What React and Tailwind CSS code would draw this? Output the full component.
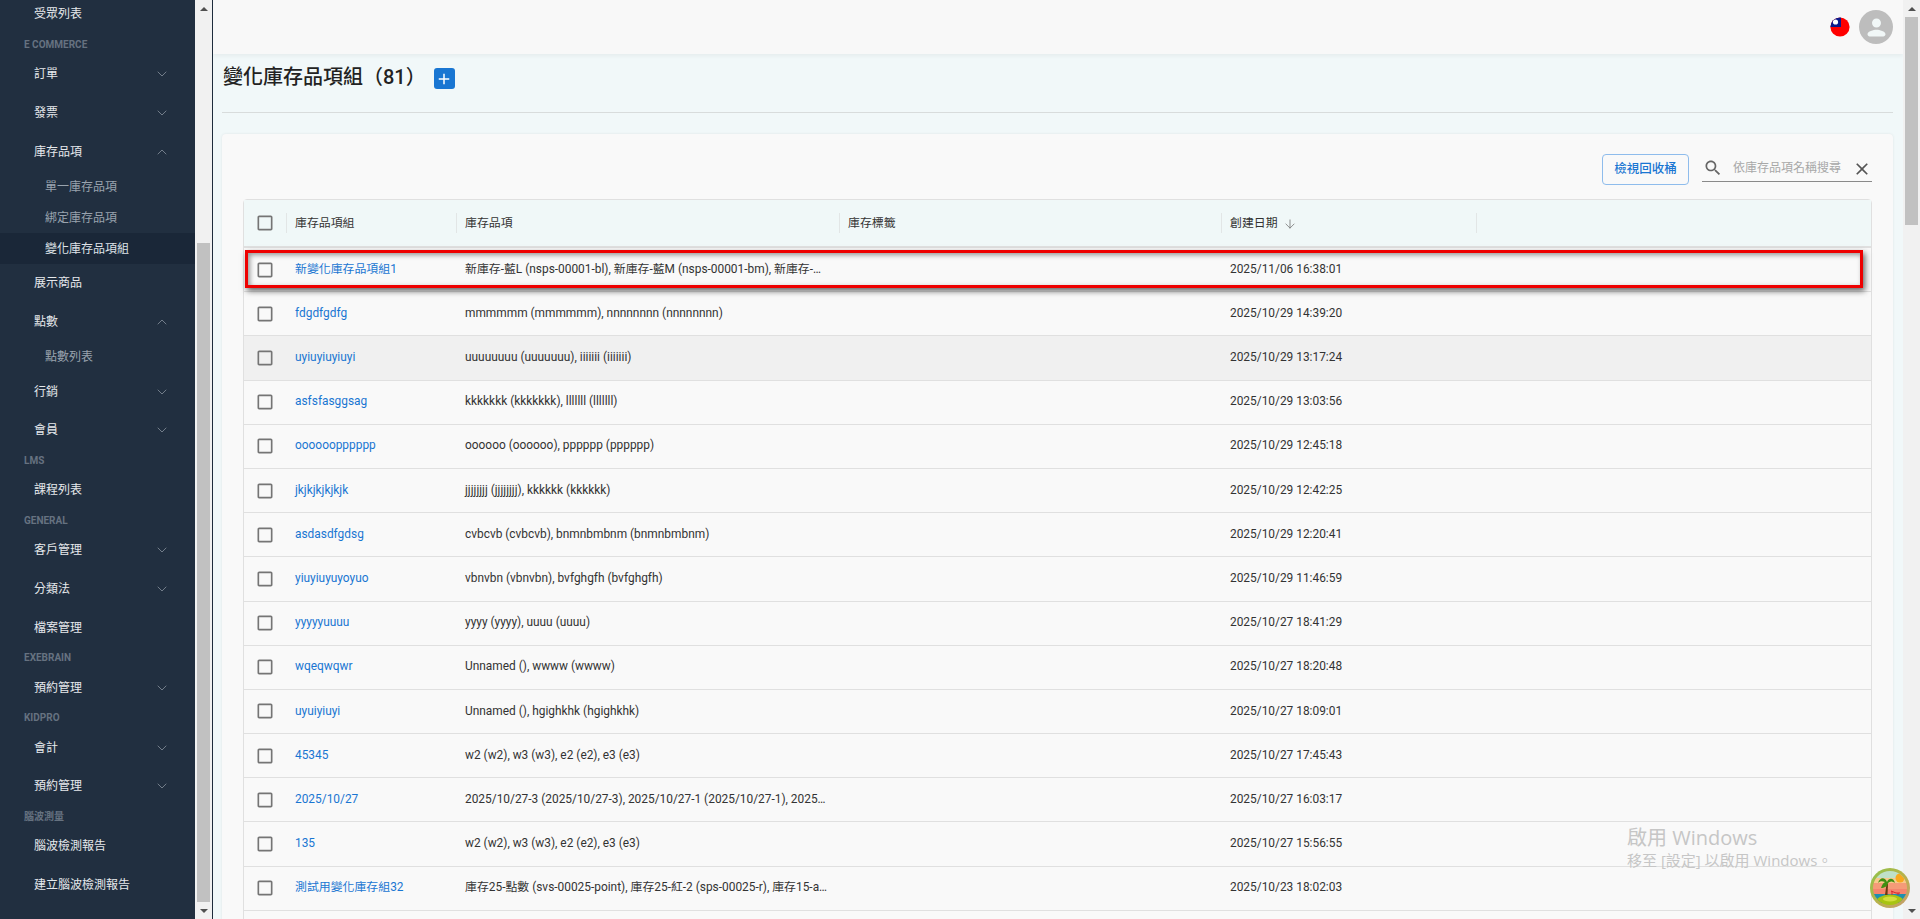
import { ChevronDown, ChevronUp, ArrowDown } from "lucide-react";

const sidebarItems = [
  { type: "item", label: "受眾列表" },
  { type: "group", label: "E COMMERCE" },
  { type: "item", label: "訂單", arrow: "down" },
  { type: "item", label: "發票", arrow: "down" },
  { type: "item", label: "庫存品項", arrow: "up" },
  { type: "sub", label: "單一庫存品項" },
  { type: "sub", label: "綁定庫存品項" },
  { type: "sub", label: "變化庫存品項組", active: true },
  { type: "item", label: "展示商品" },
  { type: "item", label: "點數", arrow: "up" },
  { type: "sub", label: "點數列表" },
  { type: "item", label: "行銷", arrow: "down" },
  { type: "item", label: "會員", arrow: "down" },
  { type: "group", label: "LMS" },
  { type: "item", label: "課程列表" },
  { type: "group", label: "GENERAL" },
  { type: "item", label: "客戶管理", arrow: "down" },
  { type: "item", label: "分類法", arrow: "down" },
  { type: "item", label: "檔案管理" },
  { type: "group", label: "EXEBRAIN" },
  { type: "item", label: "預約管理", arrow: "down" },
  { type: "group", label: "KIDPRO" },
  { type: "item", label: "會計", arrow: "down" },
  { type: "item", label: "預約管理", arrow: "down" },
  { type: "group", label: "腦波測量" },
  { type: "item", label: "腦波檢測報告" },
  { type: "item", label: "建立腦波檢測報告" },
];

const rows = [
  ["新變化庫存品項組1", "新庫存-藍L (nsps-00001-bl), 新庫存-藍M (nsps-00001-bm), 新庫存-藍S (nsps-00001-bs)", "2025/11/06 16:38:01"],
  ["fdgdfgdfg", "mmmmmm (mmmmmm), nnnnnnnn (nnnnnnnn)", "2025/10/29 14:39:20"],
  ["uyiuyiuyiuyi", "uuuuuuuu (uuuuuuu), iiiiiii (iiiiiii)", "2025/10/29 13:17:24"],
  ["asfsfasggsag", "kkkkkkk (kkkkkkk), lllllll (lllllll)", "2025/10/29 13:03:56"],
  ["oooooopppppp", "oooooo (oooooo), pppppp (pppppp)", "2025/10/29 12:45:18"],
  ["jkjkjkjkjkjk", "jjjjjjjj (jjjjjjjj), kkkkkk (kkkkkk)", "2025/10/29 12:42:25"],
  ["asdasdfgdsg", "cvbcvb (cvbcvb), bnmnbmbnm (bnmnbmbnm)", "2025/10/29 12:20:41"],
  ["yiuyiuyuyoyuo", "vbnvbn (vbnvbn), bvfghgfh (bvfghgfh)", "2025/10/29 11:46:59"],
  ["yyyyyuuuu", "yyyy (yyyy), uuuu (uuuu)", "2025/10/27 18:41:29"],
  ["wqeqwqwr", "Unnamed (), wwww (wwww)", "2025/10/27 18:20:48"],
  ["uyuiyiuyi", "Unnamed (), hgighkhk (hgighkhk)", "2025/10/27 18:09:01"],
  ["45345", "w2 (w2), w3 (w3), e2 (e2), e3 (e3)", "2025/10/27 17:45:43"],
  ["2025/10/27", "2025/10/27-3 (2025/10/27-3), 2025/10/27-1 (2025/10/27-1), 2025/10/27-2 (2025/10/27-2)", "2025/10/27 16:03:17"],
  ["135", "w2 (w2), w3 (w3), e2 (e2), e3 (e3)", "2025/10/27 15:56:55"],
  ["測試用變化庫存組32", "庫存25-點數 (svs-00025-point), 庫存25-紅-2 (sps-00025-r), 庫存15-a (sps-00015-a)", "2025/10/23 18:02:03"],
];

const gridCols = "grid grid-cols-[42px_170px_383px_382px_255px_1fr]";

const Checkbox = () => (
  <svg viewBox="0 0 24 24" className="w-5 h-5 fill-[#757575]">
    <path d="M19 5v14H5V5h14m0-2H5c-1.1 0-2 .9-2 2v14c0 1.1.9 2 2 2h14c1.1 0 2-.9 2-2V5c0-1.1-.9-2-2-2z" />
  </svg>
);

const Flag = () => (
  <svg viewBox="0 0 20 20" className="w-5 h-5">
    <defs>
      <clipPath id="flagClip">
        <circle cx="10" cy="10" r="9.6" />
      </clipPath>
    </defs>
    <g clipPath="url(#flagClip)">
      <rect width="20" height="20" fill="#f00" />
      <rect width="11" height="10" fill="#0a1a8c" />
      <circle cx="5.5" cy="5" r="2.6" fill="#fff" />
    </g>
  </svg>
);

const Mascot = () => (
  <svg viewBox="0 0 40 40" className="w-10 h-10">
    <defs>
      <clipPath id="mascotClip">
        <circle cx="20" cy="20" r="17" />
      </clipPath>
      <linearGradient id="ringGrad" x1="0" y1="0" x2="1" y2="1">
        <stop offset="0" stopColor="#8bc34a" />
        <stop offset="0.5" stopColor="#b7b34a" />
        <stop offset="1" stopColor="#c99a72" />
      </linearGradient>
    </defs>
    <circle cx="20" cy="20" r="20" fill="url(#ringGrad)" />
    <g clipPath="url(#mascotClip)">
      <rect width="40" height="8" y="2" fill="#bfe0c8" />
      <rect width="40" height="5" y="10" fill="#f8c98c" />
      <rect width="40" height="6" y="15" fill="#f59b78" />
      <rect width="40" height="5" y="21" fill="#f5856f" />
      <rect width="40" height="9" y="26" fill="#1f8fae" />
      <circle cx="30" cy="10" r="4.5" fill="#f8a81e" />
      <ellipse cx="20" cy="36" rx="15" ry="9.5" fill="#a8c412" />
      <ellipse cx="20" cy="31" rx="7" ry="2.5" fill="#d2de3c" />
      <path d="M15 27 L16.5 16 L18 16 L17.5 27 Z" fill="#6b3c12" />
      <path d="M8 15 C10 9 15 9 17 14 C19 9 24 10 25 15 C22 13 20 13 18 15 C18 18 14 20 11 20 C12 17 13 15 15 14 C12 13 10 13 8 15 Z" fill="#3f8f12" />
      <path d="M21 23 L26 25 L30 25 M22 23 L22 27 M28 25 L28 27" stroke="#d6262c" strokeWidth="1" fill="none" />
    </g>
  </svg>
);

const SidebarRow = ({ item }) => {
  if (item.type === "group") {
    return (
      <div className="h-[21.3px] pl-6 flex items-center text-[10px] font-bold text-[#667280]">
        {item.label}
      </div>
    );
  }
  if (item.type === "sub") {
    return (
      <div
        className={
          item.active
            ? "h-[31px] pl-[45px] flex items-center text-[12px] text-[#dfe3e8] bg-[#1a2738]"
            : "h-[31px] pl-[45px] flex items-center text-[12px] text-[#99a3ae]"
        }
      >
        {item.label}
      </div>
    );
  }
  return (
    <div className="h-[38.7px] pl-[34px] pr-[25px] flex items-center justify-between text-[12px] text-[#e6e9ec]">
      <span>{item.label}</span>
      {item.arrow === "down" && <ChevronDown size={16} strokeWidth={1.3} className="text-[#808a95]" />}
      {item.arrow === "up" && <ChevronUp size={16} strokeWidth={1.3} className="text-[#808a95]" />}
    </div>
  );
};

const Sidebar = () => (
  <aside className="w-[195px] h-full shrink-0 bg-[#212f40] overflow-hidden">
    <div className="-mt-[5px]">
      {sidebarItems.map((item, i) => (
        <SidebarRow key={i} item={item} />
      ))}
    </div>
  </aside>
);

const Scrollbar = ({ thumbTop, thumbHeight }) => (
  <div className="w-[17px] h-full shrink-0 bg-[#f1f1f1] flex flex-col items-center">
    <div className="h-[17px] flex items-center justify-center">
      <div className="w-0 h-0 border-x-[4px] border-x-transparent border-b-[4px] border-b-[#505050]" />
    </div>
    <div className="flex-1 w-full px-[2px]">
      <div className={thumbTop + " " + thumbHeight + " bg-[#c1c1c1]"} />
    </div>
    <div className="h-[17px] flex items-center justify-center">
      <div className="w-0 h-0 border-x-[4px] border-x-transparent border-t-[4px] border-t-[#505050]" />
    </div>
  </div>
);

const TopBar = () => (
  <header className="h-[54px] shrink-0 bg-[#f8f8f8] shadow-[0_2px_4px_rgba(0,0,0,0.05)] flex items-center justify-end gap-[9px] pr-[10px]">
    <Flag />
    <div className="w-[34px] h-[34px] rounded-full bg-[#bdbdbd] flex items-center justify-center overflow-hidden">
      <svg viewBox="0 0 24 24" className="w-[27px] h-[27px] fill-[#f1f7f7]">
        <path d="M12 12c2.21 0 4-1.79 4-4s-1.79-4-4-4-4 1.79-4 4 1.79 4 4 4zm0 2c-2.67 0-8 1.34-8 4c0 1 .9 2 2 2h12c1.1 0 2-1 2-2 0-2.66-5.33-4-8-4z" />
      </svg>
    </div>
  </header>
);

const Toolbar = () => (
  <div className="h-[65px] flex items-start justify-end pt-[20px] pr-[21px]">
    <button className="w-[87px] h-[31px] border border-[#8ebcec] rounded-[4px] text-[12.5px] font-medium text-[#1976d2] mr-[13px]">
      檢視回收桶
    </button>
    <div className="w-[170px] h-[28px] border-b border-[#8a8a8a] flex items-center">
      <svg viewBox="0 0 24 24" className="w-[20px] h-[20px] fill-[#666] ml-[1px]">
        <path d="M15.5 14h-.79l-.28-.27C15.41 12.59 16 11.11 16 9.5 16 5.91 13.09 3 9.5 3S3 5.91 3 9.5 5.91 16 9.5 16c1.61 0 3.09-.59 4.23-1.57l.27.28v.79l5 4.99L20.49 19l-4.99-5zm-6 0C7.01 14 5 11.99 5 9.5S7.01 5 9.5 5 14 7.01 14 9.5 11.99 14 9.5 14z" />
      </svg>
      <span className="ml-[10px] text-[12px] text-[#a8a8a8] whitespace-nowrap">依庫存品項名稱搜尋</span>
    </div>
  </div>
);

const HeaderCell = ({ children }) => (
  <div className="relative flex items-center pl-[9px] pt-px before:absolute before:left-0 before:top-[13px] before:bottom-[13px] before:w-px before:bg-[#e2e6e6] text-[11.9px] text-[#333]">
    {children}
  </div>
);

const DataTable = () => (
  <div className="ml-[21px] mr-[21px] border border-[#e0e0e0] rounded-t-[4px]">
    <div className={gridCols + " h-[48px] bg-[#f0f8f8] border-b-2 border-[#e0e0e0]"}>
      <div className="flex items-center justify-center">
        <Checkbox />
      </div>
      <HeaderCell>庫存品項組</HeaderCell>
      <HeaderCell>庫存品項</HeaderCell>
      <HeaderCell>庫存標籤</HeaderCell>
      <HeaderCell>
        創建日期
        <ArrowDown size={14} strokeWidth={1.4} className="ml-[5px] text-[#777]" />
      </HeaderCell>
      <HeaderCell />
    </div>
    {rows.map((row, i) => (
      <div
        key={row[0]}
        className={
          gridCols +
          " relative h-[44.2px] items-center border-b border-[#e0e0e0] text-[11.9px] text-[#333]" +
          (i === 2 ? " bg-[#f0f0f0]" : "")
        }
      >
        <div className="flex justify-center">
          <Checkbox />
        </div>
        <div className="pl-[9px] text-[#1976d2] truncate">{row[0]}</div>
        <div className="pl-[9px] pr-[10px] truncate">{row[1]}</div>
        <div />
        <div className="pl-[9px]">{row[2]}</div>
        <div />
        {i === 0 && (
          <div className="absolute left-[1px] top-[2px] w-[1618px] h-[38px] border-[3px] border-[#ee0000] shadow-[2px_3px_6px_rgba(0,0,0,0.6),inset_2px_2px_5px_rgba(0,0,0,0.4)]" />
        )}
      </div>
    ))}
    <div className="h-[44px]" />
  </div>
);

export default function App() {
  return (
    <div className="relative w-[1920px] h-[919px] flex overflow-hidden bg-[#f1f8f9] font-['Roboto','Noto_Sans_CJK_TC',sans-serif]">
      <Sidebar />
      <Scrollbar thumbTop="mt-[226px]" thumbHeight="h-[659px]" />
      <div className="w-px h-full shrink-0 bg-[#1e2c3c]" />
      <main className="flex-1 min-w-0 h-full flex flex-col overflow-hidden">
        <TopBar />
        <div className="pl-[9px] pr-[10px]">
          <div className="h-[59px] flex items-center border-b border-[#d8dcdc]">
            <h1 className="text-[20px] leading-none font-medium text-[#222] -mt-[12px] ml-[1px]">變化庫存品項組（81）</h1>
            <button className="ml-[8px] -mt-[9px] w-[21px] h-[21px] rounded-[3px] bg-[#1976d2] flex items-center justify-center">
              <svg viewBox="0 0 24 24" className="w-[18px] h-[18px] fill-white">
                <path d="M19 13h-6v6h-2v-6H5v-2h6V5h2v6h6v2z" />
              </svg>
            </button>
          </div>
          <section className="mt-[21px] bg-[#f9f9f9] rounded-[4px] shadow-[0_0_3px_rgba(0,0,0,0.08)] h-[800px]">
            <Toolbar />
            <DataTable />
          </section>
        </div>
      </main>
      <Scrollbar thumbTop="mt-0" thumbHeight="h-[208px]" />

      {/* clear button of the search field */}
      <svg viewBox="0 0 24 24" className="absolute left-[1852px] top-[159px] w-[20px] h-[20px] fill-[#555]">
        <path d="M19 6.41 17.59 5 12 10.59 6.41 5 5 6.41 10.59 12 5 17.59 6.41 19 12 13.41 17.59 19 19 17.59 13.41 12z" />
      </svg>

      {/* windows activation watermark */}
      <div className="absolute left-[1627px] top-[824px] pointer-events-none text-[#c6c6c6] font-['Open_Sans','Noto_Sans_CJK_TC',sans-serif]">
        <div className="text-[20px] leading-[27px]">啟用 Windows</div>
        <div className="text-[15px] leading-[18px]">移至 [設定] 以啟用 Windows。</div>
      </div>

      <div className="absolute left-[1870px] top-[868px]">
        <Mascot />
      </div>
    </div>
  );
}
